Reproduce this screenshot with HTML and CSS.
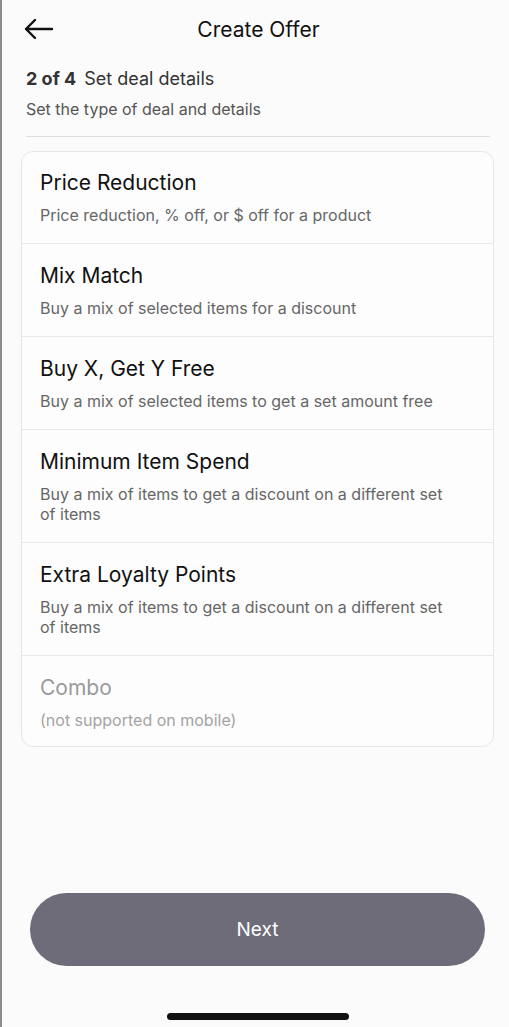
FILE: index.html
```html
<!DOCTYPE html>
<html lang="en">
<head>
    <meta charset="UTF-8">
    <meta name="viewport" content="width=device-width, initial-scale=1.0">
    <title>Create Offer</title>
    <link rel="stylesheet" href="styles.css">
</head>
<body>

<div class="screen">
    <div class="header">
        <button class="back" type="button" aria-label="Back">
            <svg width="30" height="22" viewBox="0 0 30 22">
                <path d="M2 11 H28 M11 2 L2 11 L11 20" fill="none" stroke="#111" stroke-width="2.4" stroke-linecap="round" stroke-linejoin="round"/>
            </svg>
        </button>
        <h1>Create Offer</h1>
    </div>

    <div class="main">
        <div class="step"><b>2 of 4</b>Set deal details</div>
        <div class="step-sub">Set the type of deal and details</div>
        <hr class="divider">

        <div class="card">
            <div class="option">
                <div class="option-title">Price Reduction</div>
                <div class="option-desc">Price reduction, % off, or $ off for a product</div>
            </div>
            <div class="option">
                <div class="option-title">Mix Match</div>
                <div class="option-desc">Buy a mix of selected items for a discount</div>
            </div>
            <div class="option">
                <div class="option-title">Buy X, Get Y Free</div>
                <div class="option-desc">Buy a mix of selected items to get a set amount free</div>
            </div>
            <div class="option">
                <div class="option-title">Minimum Item Spend</div>
                <div class="option-desc">Buy a mix of items to get a discount on a different set of items</div>
            </div>
            <div class="option">
                <div class="option-title">Extra Loyalty Points</div>
                <div class="option-desc">Buy a mix of items to get a discount on a different set of items</div>
            </div>
            <div class="option disabled">
                <div class="option-title">Combo</div>
                <div class="option-desc">(not supported on mobile)</div>
            </div>
        </div>
    </div>

    <div class="footer">
        <button class="next" type="button">Next</button>
        <div class="home-bar"></div>
    </div>
</div>

</body>
</html>
```

FILE: styles.css
```css
body {
    margin: 0;
    font-family: Inter, "Noto Sans", Arial, sans-serif;
    background-color: #fbfbfb;
    color: #111;
}
.screen {
    display: flex;
    flex-direction: column;
    height: 1027px;
    border-left: 2px solid #8c8c8c;
    box-sizing: border-box;
}
.header {
    height: 58px;
    display: flex;
    align-items: center;
    justify-content: center;
    position: relative;
}
.back {
    position: absolute;
    left: 22px;
    top: 18px;
    padding: 0;
    border: none;
    background: none;
    display: flex;
}
.header h1 {
    margin: 0;
    font-size: 21px;
    font-weight: 400;
    color: #111;
    padding-left: 6px;
}
.main {
    flex: 1;
    padding: 0 15px 0 19px;
}
.step {
    margin: 10px 0 0 5px;
    font-size: 18px;
    line-height: 22px;
    color: #333;
}
.step b {
    font-weight: 700;
    margin-right: 8px;
}
.step-sub {
    margin: 9px 0 0 5px;
    font-size: 16px;
    line-height: 20px;
    color: #555;
}
.divider {
    margin: 17px 4px 0 5px;
    border: none;
    border-top: 1px solid #dedede;
}
.card {
    margin-top: 14px;
    background: #fdfdfd;
    border: 1px solid #e6e6e6;
    border-radius: 12px;
}
.option {
    padding: 20px 34px 18px 18px;
    border-top: 1px solid #e8e8e8;
}
.option:first-child {
    border-top: none;
    padding-top: 19px;
}
.option:last-child {
    padding-bottom: 16px;
}
.option-title {
    font-size: 21px;
    line-height: 24px;
    font-weight: 400;
    color: #111;
}
.option-desc {
    margin-top: 10px;
    font-size: 16px;
    line-height: 20px;
    color: #666;
}
.disabled .option-title {
    color: #9a9a9a;
}
.disabled .option-desc {
    color: #a3a3a3;
}
.footer {
    display: flex;
    flex-direction: column;
    align-items: center;
    padding: 0 24px 7px 28px;
}
.next {
    width: 100%;
    height: 73px;
    border: none;
    border-radius: 37px;
    background-color: #6e6c78;
    color: white;
    font-family: inherit;
    font-size: 19px;
    font-weight: 400;
}
.home-bar {
    width: 182px;
    height: 7px;
    margin-top: 47px;
    border-radius: 4px;
    background: #111;
}
```
